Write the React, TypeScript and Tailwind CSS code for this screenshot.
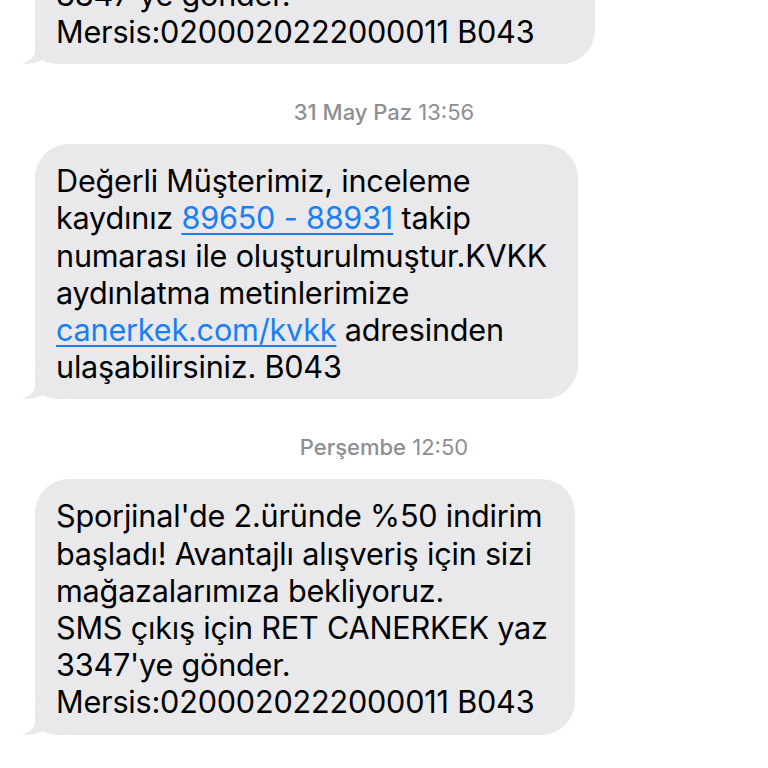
import React from "react";

const BUBBLE = "#e9e9eb";

function Tail() {
  return (
    <svg
      className="absolute left-[-14px] bottom-0"
      width="44"
      height="30"
      viewBox="0 0 44 30"
    >
      <path
        d="M14 0 L14 17 C14 23 8 27.5 1 29.4 C8 30.6 16 29 21.5 26 C26 29 32 30 44 30 L44 0 Z"
        fill={BUBBLE}
      />
    </svg>
  );
}

function Bubble({ w, children }: { w: string; children: React.ReactNode }) {
  return (
    <div className={`relative ${w}`}>
      <Tail />
      <div className="relative rounded-[34px] bg-[#e9e9eb] pl-[21px] pr-[10px] pt-[18px] pb-[14px] text-[30.6px] leading-[37.2px] text-black tracking-[-0.2px] whitespace-nowrap">
        {children}
      </div>
    </div>
  );
}

function Stamp({ date, time }: { date: string; time: string }) {
  return (
    <div className="h-[80px] pt-[36px] text-center text-[22px] leading-[24px] text-[#8e8e93]">
      <span className="font-medium">{date}</span> <span>{time}</span>
    </div>
  );
}

const Link = ({ children }: { children: React.ReactNode }) => (
  <span className="text-[#1a7ff5] underline decoration-[1.5px] underline-offset-[4px]">{children}</span>
);

export default function App() {
  return (
    <div
      className="w-[768px] h-[768px] overflow-hidden bg-white"
      style={{ fontFamily: "Inter, 'Noto Sans', sans-serif" }}
    >
      <div className="flex flex-col">
        <div className="pl-[35px] mt-[-191px]">
          <Bubble w="w-[560px]">
            Sporjinal'de 2.üründe %50 indirim<br />
            başladı! Avantajlı alışveriş için sizi<br />
            mağazalarımıza bekliyoruz.<br />
            SMS çıkış için RET CANERKEK yaz<br />
            3347'ye gönder.<br />
            Mersis:0200020222000011 B043
          </Bubble>
        </div>
        <Stamp date="31 May Paz" time="13:56" />
        <div className="pl-[35px]">
          <Bubble w="w-[543px]">
            Değerli Müşterimiz, inceleme<br />
            kaydınız <Link>89650 - 88931</Link> takip<br />
            numarası ile oluşturulmuştur.KVKK<br />
            aydınlatma metinlerimize<br />
            <Link>canerkek.com/kvkk</Link> adresinden<br />
            ulaşabilirsiniz. B043
          </Bubble>
        </div>
        <Stamp date="Perşembe" time="12:50" />
        <div className="pl-[35px]">
          <Bubble w="w-[540px]">
            Sporjinal'de 2.üründe %50 indirim<br />
            başladı! Avantajlı alışveriş için sizi<br />
            mağazalarımıza bekliyoruz.<br />
            SMS çıkış için RET CANERKEK yaz<br />
            3347'ye gönder.<br />
            Mersis:0200020222000011 B043
          </Bubble>
        </div>
      </div>
    </div>
  );
}
